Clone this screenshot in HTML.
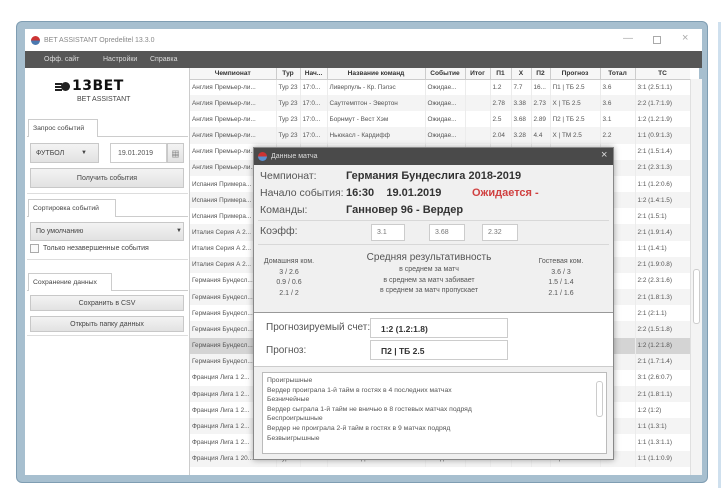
<!DOCTYPE html>
<html><head><meta charset="utf-8"><style>
*{margin:0;padding:0;box-sizing:border-box}
body{width:723px;height:488px;background:#fff;position:relative;overflow:hidden;font-family:"Liberation Sans","Noto Sans CJK SC",sans-serif;color:#333}
.a{position:absolute}
#frame{left:17px;top:22px;width:690px;height:460px;background:#fff;border:8px solid #a7bfcf;border-top-width:7px;border-radius:5px;box-shadow:0 0 0 1px #7f9db2}
#rline{left:718px;top:22px;width:3px;height:466px;background:#cfe0ee}
#title{left:25px;top:29px;width:677px;height:22px;background:#fff;font-size:7px;color:#888}
#menu{left:25px;top:51px;width:677px;height:17px;background:#565656;color:#ddd;font-size:7px}
#left{left:25px;top:68px;width:165px;height:407px;background:#fff;border-right:1px solid #ccc}
.tab{position:absolute;height:18px;border:1px solid #ccc;border-bottom:none;background:#fff;font-size:6.8px;padding:5px 4px;color:#444}
.pnl{position:absolute;left:2px;width:161px;border-top:1px solid #ccc;border-bottom:1px solid #ddd}
.btn{position:absolute;background:linear-gradient(#f3f3f3,#e2e2e2);border:1px solid #c8c8c8;font-size:7px;color:#444;text-align:center}
#tbl{left:190px;top:68px;width:500px;height:407px;background:#fff;overflow:hidden}
table{border-collapse:collapse;table-layout:fixed;width:500px;font-size:6.4px;color:#555;background:#fff}
td,th{white-space:nowrap;overflow:hidden;height:16.17px;padding:0 2px;border-right:1px solid #ececec}
th{height:11px;font-weight:bold;color:#333;background:#f6f6f6;border-right:1px solid #ccc;border-bottom:1px solid #ccc;font-size:6.6px}
td{background:#fff}
tr:nth-child(odd) td{background:#f4f4f4}
tr.sel td{background:#d4d4d4}
#sb{left:690px;top:79px;width:12px;height:396px;background:#f4f4f4;border-left:1px solid #e0e0e0}
#dlg{left:253px;top:147px;width:361px;height:313px;background:#f0f0f0;border:1px solid #888;box-shadow:0 0 6px rgba(0,0,0,.35)}
#dt{left:0;top:0;width:359px;height:17px;background:#4a4a4a;color:#ddd;font-size:7px}
.lb{position:absolute;font-size:10.5px;color:#555}
.bv{position:absolute;font-size:11px;font-weight:bold;color:#333}
.inp{position:absolute;background:#fff;border:1px solid #ccc;font-size:7px;color:#777;padding:4px 5px;height:17px}
.st{position:absolute;font-size:7px;color:#555;text-align:center;line-height:10.5px}
</style></head><body>
<div class="a" id="rline"></div>
<div class="a" id="frame"></div>
<div class="a" id="title">
 <div class="a" style="left:6px;top:7px;width:9px;height:9px;border-radius:50%;background:linear-gradient(#c33 50%,#4a79b0 50%)"></div>
 <div class="a" style="left:19px;top:8px">BET ASSISTANT Opredelitel 13.3.0</div>
 <div class="a" style="left:598px;top:4px;font-size:10px;color:#aaa">—</div>
 <div class="a" style="left:628px;top:7px;width:8px;height:8px;border:1px solid #aaa"></div>
 <div class="a" style="left:657px;top:3px;font-size:11px;color:#aaa">×</div>
</div>
<div class="a" id="menu"><span class="a" style="left:19px;top:5px">Офф. сайт</span><span class="a" style="left:78px;top:5px">Настройки</span><span class="a" style="left:125px;top:5px">Справка</span></div>
<div class="a" id="left">
 <div class="a" style="left:36px;top:14px;width:9px;height:9px;border-radius:50%;background:#222"></div>
 <div class="a" style="left:30px;top:15px;width:7px;height:1.5px;background:#222;box-shadow:0 3px #222,0 6px #222"></div>
 <div class="a" style="left:47px;top:10px;font-size:14px;font-weight:bold;color:#111;letter-spacing:0.5px;font-family:'DejaVu Sans',sans-serif">13BET</div>
 <div class="a" style="left:52px;top:28px;font-size:7px;color:#444">BET ASSISTANT</div>
 <div class="pnl" style="top:68px;height:58px"></div>
 <div class="tab" style="left:3px;top:51px;width:70px">Запрос событий</div>
 <div class="btn" style="left:5px;top:75px;width:69px;height:20px;text-align:left;padding:6px 5px">ФУТБОЛ<span style="position:absolute;left:50px;font-size:6px">▼</span></div>
 <div class="inp" style="left:85px;top:75px;width:57px;height:20px;padding:6px 7px;color:#555">19.01.2019</div>
 <div class="btn" style="left:142px;top:75px;width:17px;height:20px;padding-top:5px;font-size:8px">▦</div>
 <div class="btn" style="left:5px;top:100px;width:154px;height:20px;padding-top:6px">Получить события</div>
 <div class="pnl" style="top:148px;height:44px"></div>
 <div class="tab" style="left:3px;top:131px;width:88px">Сортировка событий</div>
 <div class="btn" style="left:5px;top:154px;width:154px;height:19px;text-align:left;padding:5px 5px">По умолчанию<span style="position:absolute;left:145px;font-size:6px">▼</span></div>
 <div class="a" style="left:5px;top:176px;width:9px;height:9px;border:1px solid #aaa;background:#fafafa"></div>
 <div class="a" style="left:18px;top:177px;font-size:7px;color:#444">Только незавершенные события</div>
 <div class="pnl" style="top:222px;height:46px"></div>
 <div class="tab" style="left:3px;top:205px;width:84px">Сохранение данных</div>
 <div class="btn" style="left:5px;top:227px;width:154px;height:16px;padding-top:4px">Сохранить в CSV</div>
 <div class="btn" style="left:5px;top:248px;width:154px;height:16px;padding-top:4px">Открыть папку данных</div>
</div>
<div class="a" id="tbl"><table>
<colgroup><col style="width:86px"><col style="width:24px"><col style="width:27px"><col style="width:98px"><col style="width:40px"><col style="width:25px"><col style="width:21px"><col style="width:20px"><col style="width:19px"><col style="width:50px"><col style="width:35px"><col style="width:55px"></colgroup>
<tr><th>Чемпионат</th><th>Тур</th><th>Нач...</th><th>Название команд</th><th>Событие</th><th>Итог</th><th>П1</th><th>X</th><th>П2</th><th>Прогноз</th><th>Тотал</th><th>ТС</th></tr>
<tr><td>Англия Премьер-ли...</td><td>Тур 23</td><td>17:0...</td><td>Ливерпуль - Кр. Пэлэс</td><td>Ожидае...</td><td></td><td>1.2</td><td>7.7</td><td>16...</td><td>П1 | ТБ 2.5</td><td>3.6</td><td>3:1 (2.5:1.1)</td></tr>
<tr><td>Англия Премьер-ли...</td><td>Тур 23</td><td>17:0...</td><td>Саутгемптон - Эвертон</td><td>Ожидае...</td><td></td><td>2.78</td><td>3.38</td><td>2.73</td><td>X | ТБ 2.5</td><td>3.6</td><td>2:2 (1.7:1.9)</td></tr>
<tr><td>Англия Премьер-ли...</td><td>Тур 23</td><td>17:0...</td><td>Борнмут - Вест Хэм</td><td>Ожидае...</td><td></td><td>2.5</td><td>3.68</td><td>2.89</td><td>П2 | ТБ 2.5</td><td>3.1</td><td>1:2 (1.2:1.9)</td></tr>
<tr><td>Англия Премьер-ли...</td><td>Тур 23</td><td>17:0...</td><td>Ньюкасл - Кардифф</td><td>Ожидае...</td><td></td><td>2.04</td><td>3.28</td><td>4.4</td><td>X | ТМ 2.5</td><td>2.2</td><td>1:1 (0.9:1.3)</td></tr>
<tr><td>Англия Премьер-ли...</td><td>Тур 23</td><td>17:0...</td><td></td><td></td><td></td><td></td><td></td><td></td><td></td><td>2.9</td><td>2:1 (1.5:1.4)</td></tr>
<tr><td>Англия Премьер-ли...</td><td>Тур 23</td><td></td><td></td><td></td><td></td><td></td><td></td><td></td><td></td><td>3.6</td><td>2:1 (2.3:1.3)</td></tr>
<tr><td>Испания Примера...</td><td></td><td></td><td></td><td></td><td></td><td></td><td></td><td></td><td></td><td>1.8</td><td>1:1 (1.2:0.6)</td></tr>
<tr><td>Испания Примера...</td><td></td><td></td><td></td><td></td><td></td><td></td><td></td><td></td><td></td><td>2.9</td><td>1:2 (1.4:1.5)</td></tr>
<tr><td>Испания Примера...</td><td></td><td></td><td></td><td></td><td></td><td></td><td></td><td></td><td></td><td>2.5</td><td>2:1 (1.5:1)</td></tr>
<tr><td>Италия Серия А 2...</td><td></td><td></td><td></td><td></td><td></td><td></td><td></td><td></td><td></td><td>3.3</td><td>2:1 (1.9:1.4)</td></tr>
<tr><td>Италия Серия А 2...</td><td></td><td></td><td></td><td></td><td></td><td></td><td></td><td></td><td></td><td>2.4</td><td>1:1 (1.4:1)</td></tr>
<tr><td>Италия Серия А 2...</td><td></td><td></td><td></td><td></td><td></td><td></td><td></td><td></td><td></td><td>2.7</td><td>2:1 (1.9:0.8)</td></tr>
<tr><td>Германия Бундесл...</td><td></td><td></td><td></td><td></td><td></td><td></td><td></td><td></td><td></td><td>3.9</td><td>2:2 (2.3:1.6)</td></tr>
<tr><td>Германия Бундесл...</td><td></td><td></td><td></td><td></td><td></td><td></td><td></td><td></td><td></td><td>3.1</td><td>2:1 (1.8:1.3)</td></tr>
<tr><td>Германия Бундесл...</td><td></td><td></td><td></td><td></td><td></td><td></td><td></td><td></td><td></td><td>3.1</td><td>2:1 (2:1.1)</td></tr>
<tr><td>Германия Бундесл...</td><td></td><td></td><td></td><td></td><td></td><td></td><td></td><td></td><td></td><td>3.3</td><td>2:2 (1.5:1.8)</td></tr>
<tr class="sel"><td>Германия Бундесл...</td><td></td><td></td><td></td><td></td><td></td><td></td><td></td><td></td><td></td><td>3</td><td>1:2 (1.2:1.8)</td></tr>
<tr><td>Германия Бундесл...</td><td></td><td></td><td></td><td></td><td></td><td></td><td></td><td></td><td></td><td>3.1</td><td>2:1 (1.7:1.4)</td></tr>
<tr><td>Франция Лига 1 2...</td><td></td><td></td><td></td><td></td><td></td><td></td><td></td><td></td><td></td><td>3.3</td><td>3:1 (2.6:0.7)</td></tr>
<tr><td>Франция Лига 1 2...</td><td></td><td></td><td></td><td></td><td></td><td></td><td></td><td></td><td></td><td>2.9</td><td>2:1 (1.8:1.1)</td></tr>
<tr><td>Франция Лига 1 2...</td><td></td><td></td><td></td><td></td><td></td><td></td><td></td><td></td><td></td><td>3</td><td>1:2 (1:2)</td></tr>
<tr><td>Франция Лига 1 2...</td><td></td><td></td><td></td><td></td><td></td><td></td><td></td><td></td><td></td><td>2.3</td><td>1:1 (1.3:1)</td></tr>
<tr><td>Франция Лига 1 2...</td><td></td><td></td><td></td><td></td><td></td><td></td><td></td><td></td><td></td><td>2.4</td><td>1:1 (1.3:1.1)</td></tr>
<tr><td>Франция Лига 1 20...</td><td>Тур 21</td><td>21:0...</td><td>Ренн - Ницца</td><td>Ожидае...</td><td></td><td>2.27</td><td>3.23</td><td>3.3</td><td>X | ТМ 2.5</td><td>2</td><td>1:1 (1.1:0.9)</td></tr>
</table></div>
<div class="a" id="sb"><div class="a" style="left:2px;top:190px;width:7px;height:55px;border:1px solid #ccc;border-radius:3px;background:#fff"></div></div>
<div class="a" id="dlg">
 <div class="a" id="dt"><div class="a" style="left:4px;top:4px;width:9px;height:9px;border-radius:50%;background:linear-gradient(#c33 50%,#5a8fd0 50%)"></div><span class="a" style="left:17px;top:5px">Данные матча</span><span class="a" style="left:347px;top:1px;font-size:11px">×</span></div>
 <div class="lb" style="left:6px;top:22px">Чемпионат:</div>
 <div class="bv" style="left:92px;top:22px">Германия Бундеслига 2018-2019</div>
 <div class="lb" style="left:6px;top:39px">Начало события:</div>
 <div class="bv" style="left:92px;top:39px">16:30&nbsp;&nbsp;&nbsp; 19.01.2019</div>
 <div class="bv" style="left:218px;top:39px;color:#d04040">Ожидается -</div>
 <div class="lb" style="left:6px;top:56px">Команды:</div>
 <div class="bv" style="left:92px;top:56px">Ганновер 96 - Вердер</div>
 <div class="a" style="left:4px;top:72px;width:351px;height:1px;background:#d8d8d8"></div>
 <div class="lb" style="left:6px;top:77px">Коэфф:</div>
 <div class="inp" style="left:117px;top:76px;width:34px">3.1</div>
 <div class="inp" style="left:175px;top:76px;width:36px">3.68</div>
 <div class="inp" style="left:228px;top:76px;width:36px">2.32</div>
 <div class="a" style="left:4px;top:96px;width:351px;height:1px;background:#d8d8d8"></div>
 <div class="st" style="left:0;top:109px;width:70px">Домашняя ком.<br>3 / 2.6<br>0.9 / 0.6<br>2.1 / 2</div>
 <div class="a" style="left:95px;top:104px;width:160px;text-align:center;font-size:10px;color:#555">Средняя результативность</div>
 <div class="st" style="left:95px;top:117px;width:160px">в среднем за матч<br>в среднем за матч забивает<br>в среднем за матч пропускает</div>
 <div class="st" style="left:272px;top:109px;width:70px">Гостевая ком.<br>3.6 / 3<br>1.5 / 1.4<br>2.1 / 1.6</div>
 <div class="a" style="left:0;top:164px;width:359px;height:55px;background:#fff;border-top:1px solid #999;border-bottom:1px solid #ccc"></div>
 <div class="lb" style="left:12px;top:174px;font-size:10px">Прогнозируемый счет:</div>
 <div class="inp" style="left:116px;top:170px;width:138px;height:20px;font-size:8.5px;font-weight:bold;color:#333;padding:5px 10px">1:2 (1.2:1.8)</div>
 <div class="lb" style="left:12px;top:197px;font-size:10px">Прогноз:</div>
 <div class="inp" style="left:116px;top:192px;width:138px;height:20px;font-size:8.5px;font-weight:bold;color:#333;padding:5px 10px">П2 | ТБ 2.5</div>
 <div class="a" style="left:8px;top:224px;width:345px;height:82px;background:#fff;border:1px solid #bbb;font-size:6.8px;line-height:9.6px;color:#555;padding:3px 4px;overflow:hidden">Проигрышные<br>Вердер проиграла 1-й тайм в гостях в 4 последних матчах<br>Безничейные<br>Вердер сыграла 1-й тайм не вничью в 8 гостевых матчах подряд<br>Беспроигрышные<br>Вердер не проиграла 2-й тайм в гостях в 9 матчах подряд<br>Безвыигрышные
  <div class="a" style="left:333px;top:8px;width:7px;height:36px;border:1px solid #ccc;border-radius:3px"></div></div>
</div>
</body></html>
